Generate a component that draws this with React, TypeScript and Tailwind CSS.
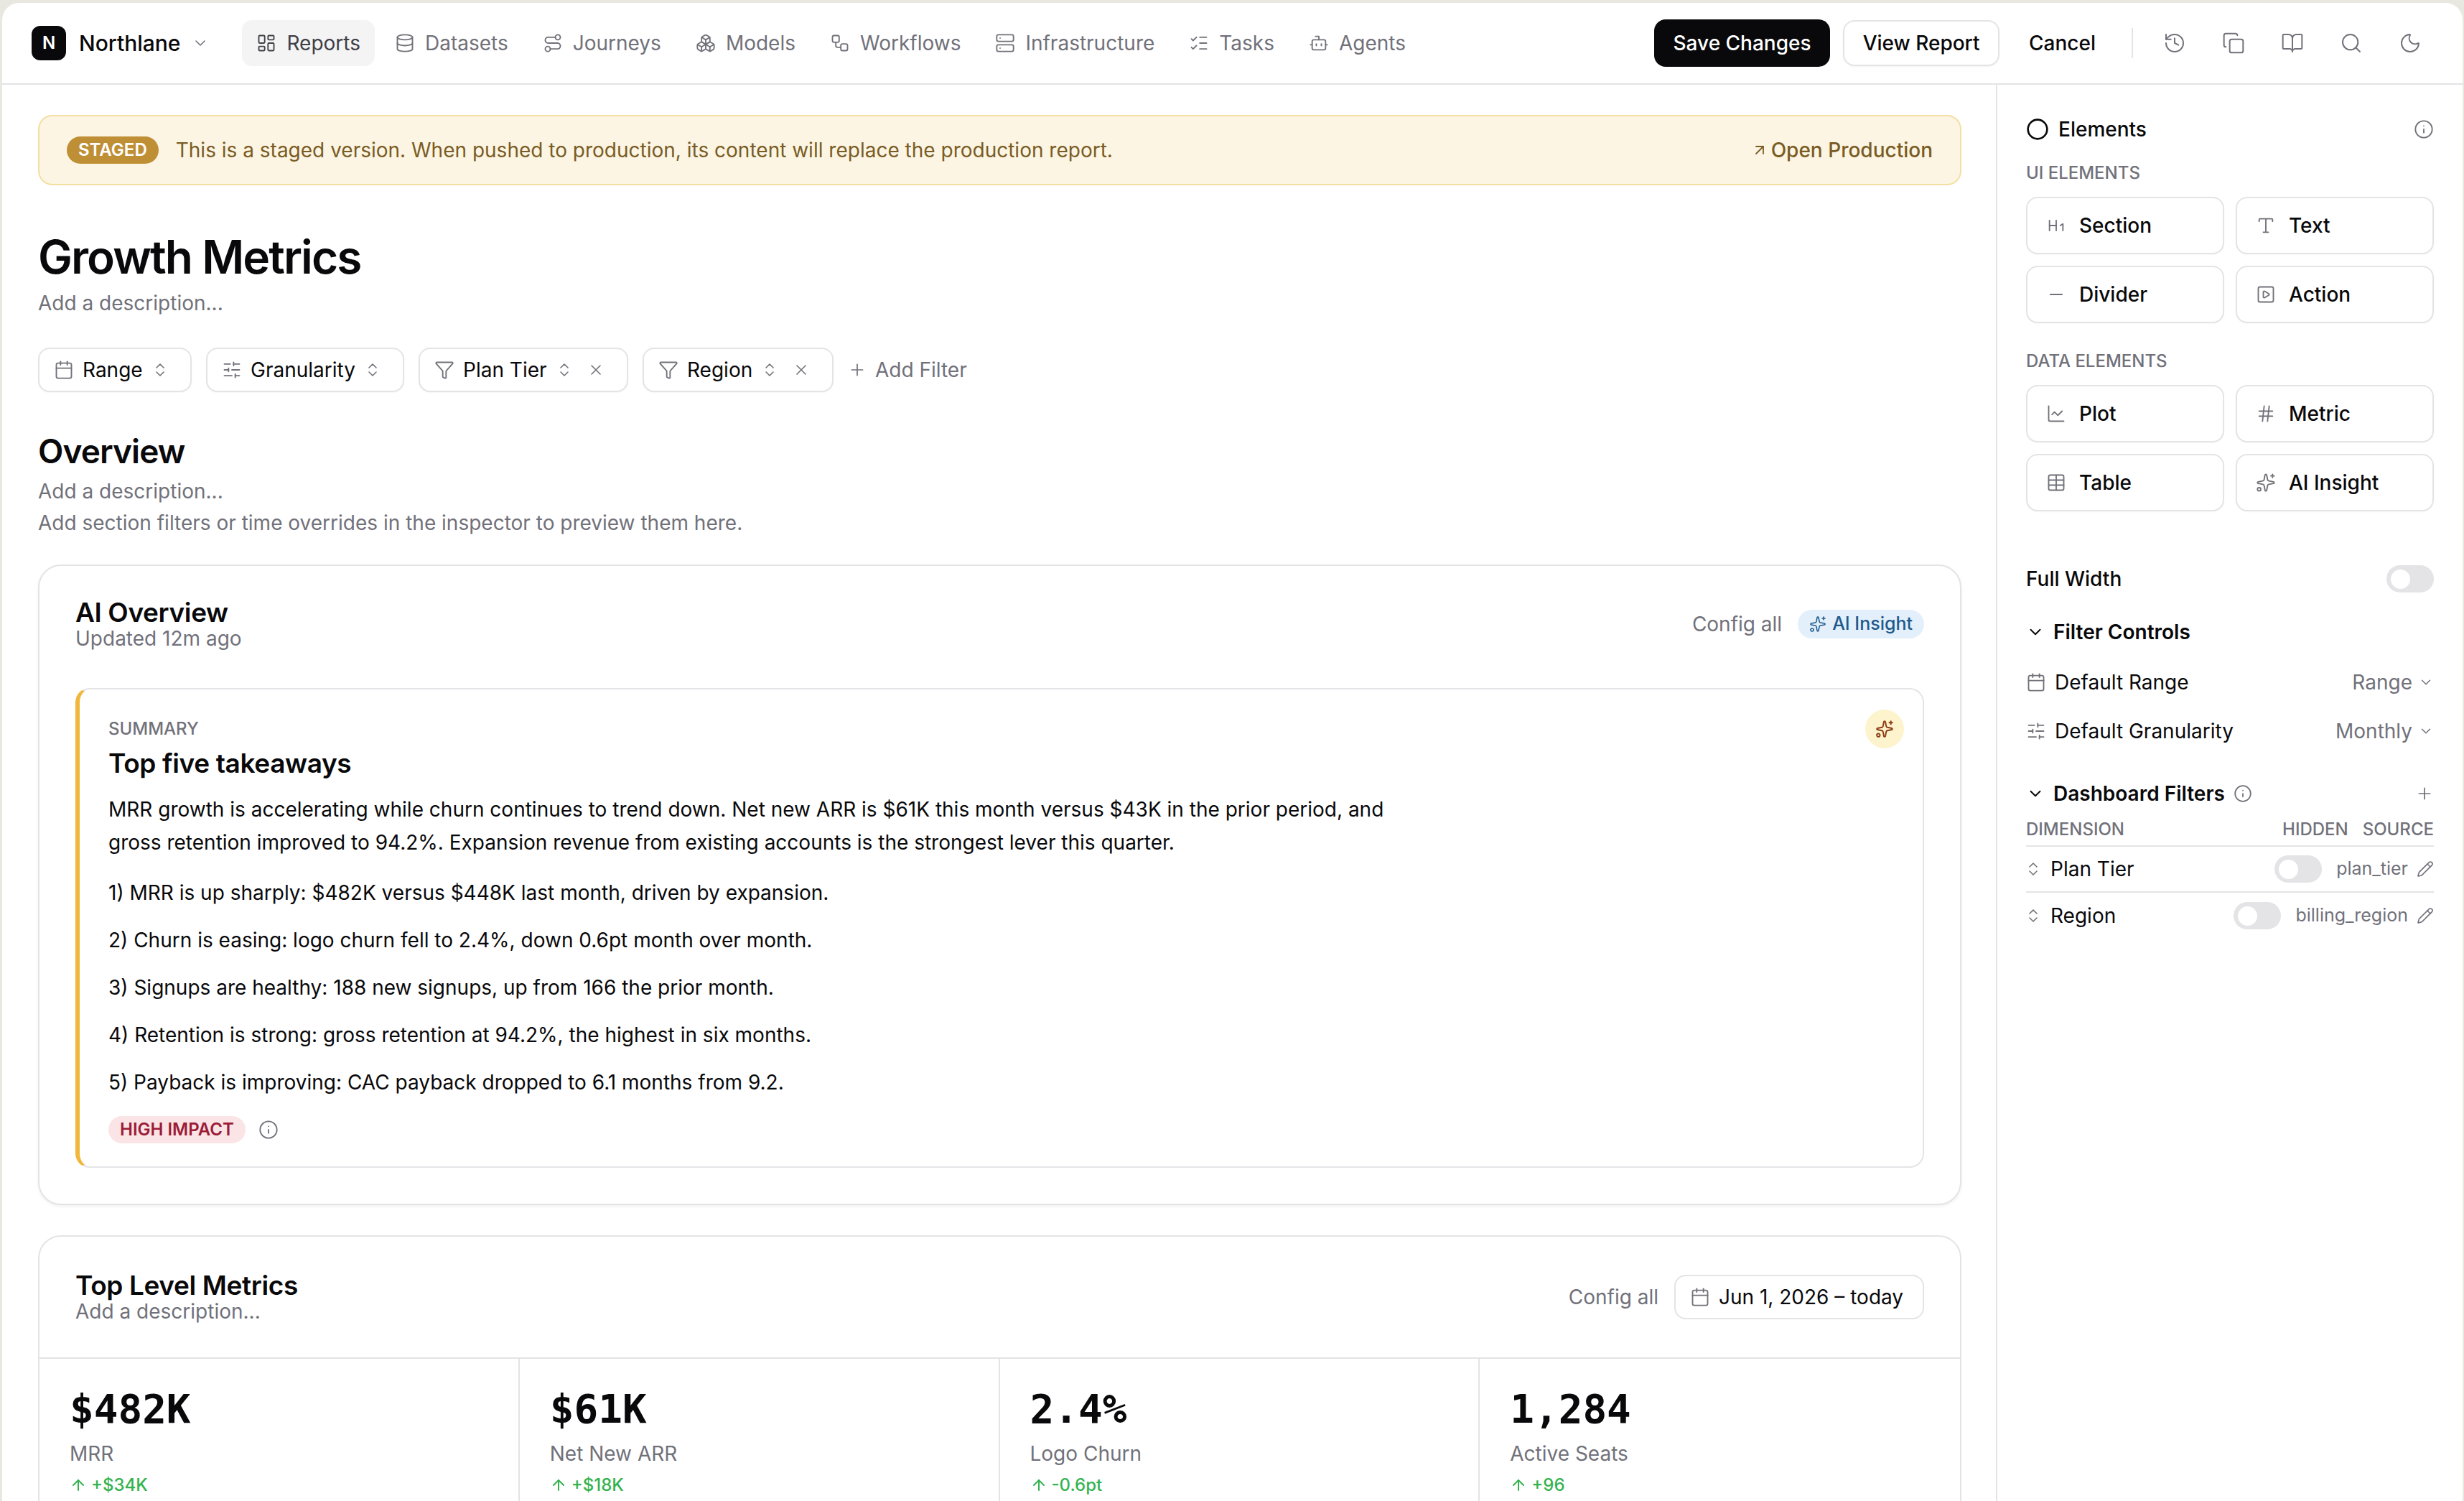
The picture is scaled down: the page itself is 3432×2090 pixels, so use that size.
import {
  ArrowUp,
  ArrowUpRight,
  Bot,
  BookOpen,
  Boxes,
  Calendar,
  ChartLine,
  ChevronDown,
  ChevronsUpDown,
  Circle,
  Copy,
  Database,
  Funnel,
  Hash,
  Heading1,
  History,
  Info,
  LayoutDashboard,
  ListChecks,
  Minus,
  Moon,
  Pencil,
  Plus,
  Route,
  Search,
  Server,
  SlidersHorizontal,
  Sparkles,
  SquarePlay,
  Table,
  Type,
  Workflow,
  X,
} from "lucide-react";

const navItems = [
  { label: "Reports", icon: LayoutDashboard, active: true },
  { label: "Datasets", icon: Database },
  { label: "Journeys", icon: Route },
  { label: "Models", icon: Boxes },
  { label: "Workflows", icon: Workflow },
  { label: "Infrastructure", icon: Server },
  { label: "Tasks", icon: ListChecks },
  { label: "Agents", icon: Bot },
];

const takeaways = [
  "1) MRR is up sharply: $482K versus $448K last month, driven by expansion.",
  "2) Churn is easing: logo churn fell to 2.4%, down 0.6pt month over month.",
  "3) Signups are healthy: 188 new signups, up from 166 the prior month.",
  "4) Retention is strong: gross retention at 94.2%, the highest in six months.",
  "5) Payback is improving: CAC payback dropped to 6.1 months from 9.2.",
];

const metrics = [
  { value: "$482K", label: "MRR", delta: "+$34K" },
  { value: "$61K", label: "Net New ARR", delta: "+$18K" },
  { value: "2.4%", label: "Logo Churn", delta: "-0.6pt" },
  { value: "1,284", label: "Active Seats", delta: "+96" },
];

function FilterChip({
  icon: Icon,
  label,
  removable,
  className,
}: {
  icon: typeof Calendar;
  label: string;
  removable?: boolean;
  className: string;
}) {
  return (
    <div className={`flex h-[62px] items-center rounded-[16px] border-2 border-[#e4e4e7] bg-white pl-[20px] shadow-[0_1px_2px_rgba(0,0,0,0.04)] ${className}`}>
      <Icon size={28} strokeWidth={1.6} className="shrink-0 text-[#71717a]" />
      <span className="ml-[12px] text-[28px] text-[#09090b]">{label}</span>
      <ChevronsUpDown size={24} strokeWidth={1.6} className="ml-[12px] shrink-0 text-[#71717a]" />
      {removable && <X size={24} strokeWidth={1.6} className="ml-[20px] shrink-0 text-[#71717a]" />}
    </div>
  );
}

function ElementButton({ icon: Icon, label }: { icon: typeof Calendar; label: string }) {
  return (
    <div className="flex h-[80px] items-center gap-[18px] rounded-[16px] border-2 border-[#e4e4e7] bg-white pl-[26px] shadow-[0_1px_2px_rgba(0,0,0,0.03)]">
      <Icon size={28} strokeWidth={1.6} className="shrink-0 text-[#71717a]" />
      <span className="text-[28px] font-[450] text-[#09090b]">{label}</span>
    </div>
  );
}

function Toggle() {
  return (
    <div className="flex h-[38px] w-[66px] shrink-0 items-center rounded-full bg-[#e4e4e7] pl-[6px]">
      <div className="size-[27px] rounded-full bg-white" />
    </div>
  );
}

function FilterRow({ name, source }: { name: string; source: string }) {
  return (
    <div className="flex h-[64px] items-center">
      <ChevronsUpDown size={24} strokeWidth={1.6} className="-ml-[2px] shrink-0 text-[#71717a]" />
      <span className="ml-[12px] flex-1 text-[28px] text-[#09090b]">{name}</span>
      <Toggle />
      <span className="ml-[20px] text-[25px] text-[#71717a]">{source}</span>
      <Pencil size={24} strokeWidth={1.6} className="ml-[12px] shrink-0 text-[#71717a]" />
    </div>
  );
}

export default function App() {
  return (
    <div className="h-[2090px] w-[3432px] overflow-hidden bg-[#e9e8e0] pl-[3px] pr-[2px] pt-[4px] font-['Inter',sans-serif] text-[#09090b]">
      <div className="flex h-[2086px] flex-col overflow-hidden rounded-t-[24px] bg-white">
        {/* Top bar */}
        <header className="flex h-[114px] shrink-0 items-center border-b-2 border-[#e4e4e7] pl-[41px]">
          <div className="flex size-[48px] items-center justify-center rounded-[12px] bg-[#09090b] text-[24px] font-semibold text-white">N</div>
          <span className="ml-[18px] text-[30px] font-medium">Northlane</span>
          <ChevronDown size={24} strokeWidth={1.6} className="ml-[16px] text-[#71717a]" />
          <nav className="ml-[46px] flex items-center gap-[8px]">
            {navItems.map((item) => (
              <div
                key={item.label}
                className={`flex h-[64px] items-center gap-[14px] rounded-[14px] px-[20px] text-[28px] ${
                  item.active ? "bg-[#f4f4f5] text-[#3f3f46]" : "text-[#71717a]"
                }`}
              >
                <item.icon size={28} strokeWidth={1.6} />
                {item.label}
              </div>
            ))}
          </nav>
          <div className="ml-auto flex items-center pr-[57px]">
            <div className="flex h-[66px] w-[245px] items-center justify-center rounded-[16px] bg-[#09090b] text-[28px] font-medium text-white">Save Changes</div>
            <div className="ml-[18px] flex h-[64px] w-[218px] items-center justify-center rounded-[16px] border-2 border-[#e4e4e7] text-[28px] font-medium shadow-[0_1px_2px_rgba(0,0,0,0.05)]">View Report</div>
            <span className="ml-[41px] text-[28px] font-medium">Cancel</span>
            <div className="ml-[50px] h-[42px] w-[2px] bg-[#e4e4e7]" />
            <div className="ml-[42px] flex items-center gap-[50px] text-[#71717a]">
              <History size={32} strokeWidth={1.5} />
              <Copy size={32} strokeWidth={1.5} />
              <BookOpen size={32} strokeWidth={1.5} />
              <Search size={32} strokeWidth={1.5} />
              <Moon size={32} strokeWidth={1.5} />
            </div>
          </div>
        </header>

        <div className="flex min-h-0 flex-1">
          {/* Main canvas */}
          <main className="min-w-0 flex-1 pl-[50px] pr-[48px] pt-[42px]">
            <div className="flex h-[98px] items-center rounded-[20px] border-2 border-[#f3dfa2] bg-[#fcf5e3] pl-[38px] pr-[38px] text-[28px] text-[#7a5c25]">
              <span className="flex h-[38px] items-center rounded-full bg-[#bf8f36] px-[16px] text-[24px] font-semibold text-white">STAGED</span>
              <span className="ml-[24px]">This is a staged version. When pushed to production, its content will replace the production report.</span>
              <span className="ml-auto flex items-center gap-[4px] font-medium">
                <ArrowUpRight size={24} strokeWidth={1.8} />
                Open Production
              </span>
            </div>

            <h1 className="mt-[62px] text-[64px] font-semibold leading-[76px] tracking-[-0.03em]">Growth Metrics</h1>
            <p className="mt-[6px] text-[28px] leading-[40px] text-[#71717a]">Add a description...</p>

            <div className="mt-[42px] flex items-center gap-[20px]">
              <FilterChip icon={Calendar} label="Range" className="w-[214px]" />
              <FilterChip icon={SlidersHorizontal} label="Granularity" className="w-[276px]" />
              <FilterChip icon={Funnel} label="Plan Tier" removable className="w-[292px]" />
              <FilterChip icon={Funnel} label="Region" removable className="w-[266px]" />
              <div className="flex items-center gap-[12px] text-[28px] text-[#71717a]">
                <Plus size={26} strokeWidth={1.6} />
                Add Filter
              </div>
            </div>

            <h2 className="mt-[54px] text-[46px] font-semibold leading-[56px] tracking-[-0.02em]">Overview</h2>
            <p className="mt-[6px] text-[28px] leading-[44px] text-[#71717a]">Add a description...</p>
            <p className="text-[28px] leading-[44px] text-[#71717a]">Add section filters or time overrides in the inspector to preview them here.</p>

            {/* AI Overview card */}
            <section className="mt-[36px] h-[892px] rounded-[32px] border-2 border-[#e4e4e7] bg-white px-[50px] shadow-[0_2px_4px_rgba(0,0,0,0.06)]">
              <div className="flex h-[170px] items-center justify-between pb-[8px]">
                <div>
                  <h3 className="text-[37px] font-semibold leading-[40px] tracking-[-0.01em]">AI Overview</h3>
                  <p className="text-[28px] leading-[32px] text-[#71717a]">Updated 12m ago</p>
                </div>
                <div className="flex items-center">
                  <span className="text-[28px] text-[#71717a]">Config all</span>
                  <span className="ml-[22px] flex h-[40px] items-center gap-[8px] rounded-full bg-[#e3f0fb] px-[16px] text-[25px] font-medium text-[#1f5a8c]">
                    <Sparkles size={24} strokeWidth={1.6} />
                    AI Insight
                  </span>
                </div>
              </div>

              <div className="relative h-[668px] rounded-[20px] border-2 border-l-[6px] border-[#e4e4e7] border-l-[#f0b73c] pl-[40px] pt-[40px]">
                <div className="absolute right-[26px] top-[28px] flex size-[54px] items-center justify-center rounded-full bg-[#fdf3cd] text-[#8b3d13]">
                  <Sparkles size={26} strokeWidth={1.8} />
                </div>
                <div className="text-[24px] font-medium leading-[30px] text-[#71717a]">SUMMARY</div>
                <h4 className="mt-[8px] text-[37px] font-semibold leading-[50px] tracking-[-0.01em]">Top five takeaways</h4>
                <p className="mt-[16px] w-[1800px] text-[28px] leading-[46px]">
                  MRR growth is accelerating while churn continues to trend down. Net new ARR is $61K this month versus $43K in the prior period, and gross retention improved to 94.2%. Expansion revenue from existing accounts is the strongest lever this quarter.
                </p>
                <div className="mt-[24px] flex flex-col gap-[20px]">
                  {takeaways.map((line) => (
                    <p key={line} className="text-[28px] leading-[46px]">
                      {line}
                    </p>
                  ))}
                </div>
                <div className="mt-[24px] flex items-center gap-[18px]">
                  <span className="flex h-[38px] items-center rounded-full bg-[#fbe4e6] px-[16px] text-[24px] font-semibold text-[#9b1c36]">HIGH IMPACT</span>
                  <Info size={28} strokeWidth={1.6} className="text-[#71717a]" />
                </div>
              </div>
            </section>

            {/* Top level metrics card */}
            <section className="mt-[42px] rounded-[32px] border-2 border-[#e4e4e7] bg-white">
              <div className="flex h-[170px] items-center justify-between border-b-2 border-[#e4e4e7] px-[50px]">
                <div>
                  <h3 className="text-[37px] font-semibold leading-[40px] tracking-[-0.01em]">Top Level Metrics</h3>
                  <p className="text-[28px] leading-[32px] text-[#71717a]">Add a description...</p>
                </div>
                <div className="flex items-center">
                  <span className="text-[28px] text-[#71717a]">Config all</span>
                  <div className="ml-[22px] flex h-[62px] w-[348px] items-center gap-[12px] rounded-[16px] border-2 border-[#e4e4e7] pl-[20px] text-[28px]">
                    <Calendar size={28} strokeWidth={1.6} className="text-[#71717a]" />
                    Jun 1, 2026 – today
                  </div>
                </div>
              </div>
              <div className="grid grid-cols-4">
                {metrics.map((metric, i) => (
                  <div key={metric.label} className={`h-[300px] pl-[42px] pt-[32px] ${i < 3 ? "border-r-2 border-[#e4e4e7]" : ""}`}>
                    <div className="font-['DejaVu_Sans_Mono',monospace] text-[56px] font-bold leading-[76px]">{metric.value}</div>
                    <div className="mt-[4px] text-[28px] leading-[40px] text-[#71717a]">{metric.label}</div>
                    <div className="mt-[6px] flex items-center gap-[6px] text-[24px] font-medium leading-[36px] text-[#34b34f]">
                      <ArrowUp size={24} strokeWidth={2} />
                      {metric.delta}
                    </div>
                  </div>
                ))}
              </div>
            </section>
          </main>

          {/* Inspector */}
          <aside className="w-[650px] shrink-0 border-l-2 border-[#e4e4e7] pl-[40px] pr-[40px] pt-[42px]">
            <div className="flex h-[40px] items-center">
              <Circle size={32} strokeWidth={2} />
              <span className="ml-[13px] text-[28px] font-medium">Elements</span>
              <Info size={28} strokeWidth={1.6} className="ml-auto text-[#71717a]" />
            </div>
            <div className="mt-[26px] text-[24px] font-medium leading-[30px] text-[#71717a]">UI ELEMENTS</div>
            <div className="mt-[18px] grid grid-cols-2 gap-x-[16px] gap-y-[16px]">
              <ElementButton icon={Heading1} label="Section" />
              <ElementButton icon={Type} label="Text" />
              <ElementButton icon={Minus} label="Divider" />
              <ElementButton icon={SquarePlay} label="Action" />
            </div>
            <div className="mt-[38px] text-[24px] font-medium leading-[30px] text-[#71717a]">DATA ELEMENTS</div>
            <div className="mt-[18px] grid grid-cols-2 gap-x-[16px] gap-y-[16px]">
              <ElementButton icon={ChartLine} label="Plot" />
              <ElementButton icon={Hash} label="Metric" />
              <ElementButton icon={Table} label="Table" />
              <ElementButton icon={Sparkles} label="AI Insight" />
            </div>

            <div className="mt-[74px] flex h-[40px] items-center justify-between">
              <span className="text-[28px] font-[450]">Full Width</span>
              <Toggle />
            </div>

            <div className="mt-[34px] flex h-[40px] items-center gap-[12px]">
              <ChevronDown size={26} strokeWidth={1.8} />
              <span className="text-[28px] font-semibold">Filter Controls</span>
            </div>
            <div className="mt-[30px] flex h-[40px] items-center">
              <Calendar size={28} strokeWidth={1.6} className="text-[#71717a]" />
              <span className="ml-[12px] text-[28px]">Default Range</span>
              <span className="ml-auto text-[28px] text-[#71717a]">Range</span>
              <ChevronDown size={22} strokeWidth={1.6} className="ml-[8px] text-[#71717a]" />
            </div>
            <div className="mt-[28px] flex h-[40px] items-center">
              <SlidersHorizontal size={28} strokeWidth={1.6} className="text-[#71717a]" />
              <span className="ml-[12px] text-[28px]">Default Granularity</span>
              <span className="ml-auto text-[28px] text-[#71717a]">Monthly</span>
              <ChevronDown size={22} strokeWidth={1.6} className="ml-[8px] text-[#71717a]" />
            </div>

            <div className="mt-[47px] flex h-[40px] items-center">
              <ChevronDown size={26} strokeWidth={1.8} />
              <span className="ml-[12px] text-[28px] font-semibold">Dashboard Filters</span>
              <Info size={26} strokeWidth={1.6} className="ml-[12px] text-[#71717a]" />
              <Plus size={26} strokeWidth={1.6} className="ml-auto text-[#71717a]" />
            </div>
            <div className="mt-[14px] flex h-[40px] items-center border-b-2 border-[#e4e4e7] pb-[6px] text-[24px] font-medium text-[#71717a]">
              <span className="flex-1">DIMENSION</span>
              <span>HIDDEN</span>
              <span className="ml-[20px]">SOURCE</span>
            </div>
            <div className="divide-y-2 divide-[#e4e4e7]">
              <FilterRow name="Plan Tier" source="plan_tier" />
              <FilterRow name="Region" source="billing_region" />
            </div>
          </aside>
        </div>
      </div>
    </div>
  );
}
